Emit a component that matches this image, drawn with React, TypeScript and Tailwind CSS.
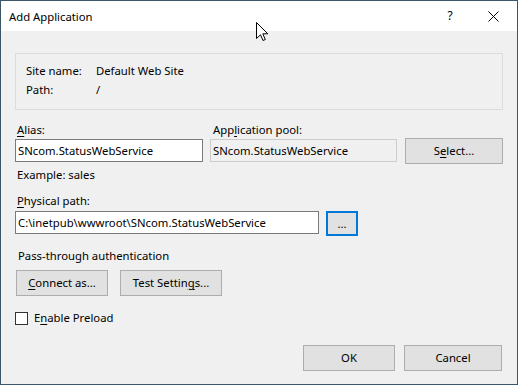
const font = { fontFamily: '"Noto Sans", "Segoe UI", sans-serif' };

function Btn({ children, className }: { children: React.ReactNode; className?: string }) {
  return (
    <div
      className={
        "h-[26px] flex items-center justify-center border border-[#adadad] bg-[#e1e1e1] text-black " +
        (className ?? "")
      }
    >
      {children}
    </div>
  );
}

function TextBox({ value, readOnly, className }: { value: string; readOnly?: boolean; className?: string }) {
  return (
    <div
      className={
        "h-[23px] flex items-center px-[2px] border whitespace-nowrap overflow-hidden " +
        (readOnly ? "bg-[#f0f0f0] border-[#cccccc] " : "bg-white border-[#7a7a7a] ") +
        (className ?? "")
      }
    >
      {value}
    </div>
  );
}

function Key({ children }: { children: React.ReactNode }) {
  return <span className="underline underline-offset-2 decoration-1">{children}</span>;
}

export default function App() {
  return (
    <div
      className="relative w-[518px] h-[385px] border border-[#3b5569] flex flex-col text-[11.3px] leading-[16px] text-black select-none"
      style={font}
    >
      {/* title bar */}
      <div className="h-[30px] bg-white flex items-center pl-[8px] shrink-0">
        <span className="flex-1 pt-[1px]">Add Application</span>
        <span className="w-[12px] text-center mr-[32px] text-[12px]">?</span>
        <svg width="11" height="11" viewBox="0 0 11 11" className="mr-[18px]">
          <path d="M0.5 0.5 L10.5 10.5 M10.5 0.5 L0.5 10.5" stroke="#000" strokeWidth="1" />
        </svg>
      </div>

      <div className="flex-1 bg-[#f0f0f0] flex flex-col pl-[14px] pr-[14px] pt-[22px] pb-[13px]">
        {/* site info */}
        <div className="w-[488px] h-[57px] border border-[#dcdcdc] pl-[10px] pt-[7px]">
          <div className="flex h-[19px] items-center">
            <span className="w-[70px]">Site name:</span>
            <span>Default Web Site</span>
          </div>
          <div className="flex h-[19px] items-center">
            <span className="w-[70px]">Path:</span>
            <span>/</span>
          </div>
        </div>

        {/* alias / pool */}
        <div className="flex mt-[12px] h-[16px]">
          <span className="w-[195px] pl-[2px]">
            <Key>A</Key>lias:
          </span>
          <span className="pl-[3px]">
            App<Key>l</Key>ication pool:
          </span>
        </div>
        <div className="flex items-center h-[25px]">
          <TextBox value="SNcom.StatusWebService" className="w-[188px]" />
          <TextBox value="SNcom.StatusWebService" readOnly className="w-[187px] ml-[7px]" />
          <Btn className="w-[98px] ml-[8px]">
            S<Key>e</Key>lect...
          </Btn>
        </div>
        <div className="mt-[4px] pl-[2px]">Example: sales</div>

        {/* physical path */}
        <div className="mt-[10px] pl-[2px]">
          <Key>P</Key>hysical path:
        </div>
        <div className="flex items-start mt-[2px]">
          <TextBox value="C:\inetpub\wwwroot\SNcom.StatusWebService" className="w-[304px]" />
          <div className="ml-[7px] w-[32px] h-[25px] border-2 border-[#0078d7] bg-[#e1e1e1] flex items-center justify-center">
            ...
          </div>
        </div>

        <div className="mt-[12px] pl-[3px]">Pass-through authentication</div>
        <div className="flex mt-[6px] ml-[1px] gap-[12px]">
          <Btn className="w-[92px]">
            <Key>C</Key>onnect as...
          </Btn>
          <Btn className="w-[102px]">
            Test Settin<Key>g</Key>s...
          </Btn>
        </div>

        <div className="flex items-center mt-[14px] h-[16px]">
          <div className="w-[13px] h-[13px] border border-[#333333] bg-white" />
          <span className="ml-[6px]">
            E<Key>n</Key>able Preload
          </span>
        </div>

        <div className="flex-1" />
        <div className="flex justify-end gap-[9px] pr-[1px]">
          <Btn className="w-[92px]">OK</Btn>
          <Btn className="w-[98px]">Cancel</Btn>
        </div>
      </div>

      {/* mouse pointer */}
      <svg width="13" height="20" viewBox="0 0 13 20" className="absolute left-[255px] top-[21px]">
        <path
          d="M0.5 0.5 L0.5 16.5 L4.5 12.8 L7 18.5 L9.3 17.5 L6.8 11.8 L11.8 11.8 Z"
          fill="#fff"
          stroke="#000"
          strokeWidth="1"
          strokeLinejoin="miter"
        />
      </svg>
    </div>
  );
}
